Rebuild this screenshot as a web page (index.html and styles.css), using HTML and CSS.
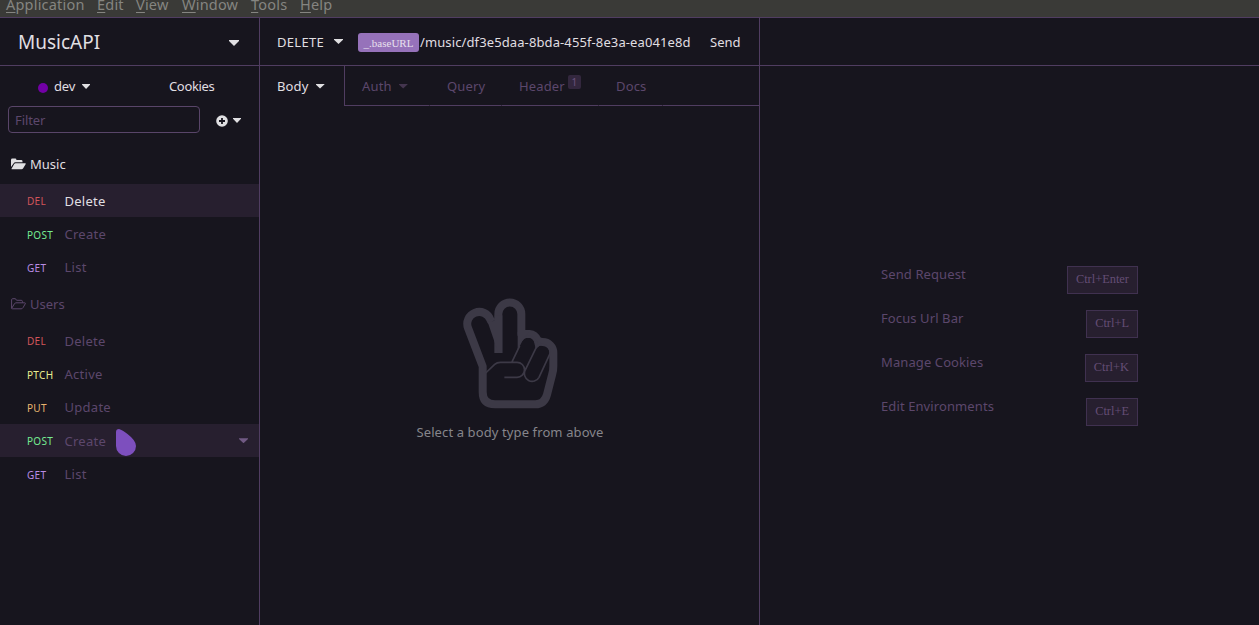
FILE: index.html
```html
<!DOCTYPE html>
<html lang="en">
<head>
<meta charset="utf-8">
<title>MusicAPI</title>
<link rel="stylesheet" href="styles.css">
</head>
<body>
<div class="app">
  <nav class="menubar">
    <span class="m-app"><u>A</u>pplication</span><span class="m-edit"><u>E</u>dit</span><span class="m-view"><u>V</u>iew</span><span class="m-window"><u>W</u>indow</span><span class="m-tools"><u>T</u>ools</span><span class="m-help"><u>H</u>elp</span>
  </nav>
  <main class="panes">
    <aside class="sidebar">
      <header class="workspace"><h1>MusicAPI</h1><i class="caret caret-lg"></i></header>
      <div class="envbar">
        <div class="env"><i class="dot"></i><span>dev</span><i class="caret"></i></div>
        <span class="cookies">Cookies</span>
      </div>
      <div class="filterbar">
        <div class="filter">Filter</div>
        <svg class="plus" viewBox="0 0 12 12"><circle cx="6" cy="6" r="5.800" fill="#e0dfe2"/><path d="M6 3v6M3 6h6" stroke="#17151e" stroke-width="1.8"/></svg>
        <i class="caret"></i>
      </div>
      <div class="tree">
        <div class="folder open">
          <svg class="folder-icon" viewBox="0 0 15 12"><path d="M0 9V2Q0 .6 1.4.6H4.2Q5.3.6 5.5 2H10.200Q11.500 2 11.500 3.300V4.300H4.500Q3.300 4.400 2.500 5.500Z" fill="#e0dfe2"/><path d="M.4 11 3.200 6Q3.700 5.200 4.600 5.200H14.200Q15.200 5.300 14.600 6.200L12.200 10.300Q11.600 11.200 10.600 11.200H.8Z" fill="#e0dfe2"/></svg>
          <span>Music</span>
        </div>
        <div class="request active"><b class="del">DEL</b><span>Delete</span></div>
        <div class="request"><b class="post">POST</b><span>Create</span></div>
        <div class="request"><b class="get">GET</b><span>List</span></div>
        <div class="folder">
          <svg class="folder-icon" viewBox="0 0 15 12"><path d="M.6 10V1.800Q.6.7 1.700.7H4Q5 .7 5.100 1.700 5.200 2.300 6 2.300H10.200Q11.400 2.300 11.400 3.400V4.700M.7 10.300 3.500 5.700Q4.100 4.800 5 4.800H13.700Q14.800 4.900 14.200 5.900L12 9.700Q11.300 10.800 10.200 10.800H1.400Q.3 10.800.7 10.100" fill="none" stroke="#5c476c"/></svg>
          <span>Users</span>
        </div>
        <div class="request"><b class="del">DEL</b><span>Delete</span></div>
        <div class="request"><b class="ptch">PTCH</b><span>Active</span></div>
        <div class="request"><b class="put">PUT</b><span>Update</span></div>
        <div class="request hover"><b class="post">POST</b><span>Create</span><i class="caret row-caret"></i>
          <svg class="pointer" viewBox="0 0 20 27"><path d="M0 3Q0 0 3 0 6.500 1 11.500 5 20 11.500 20 17A10 10 0 0 1 0 17Z" fill="#7d4fbe"/></svg>
        </div>
        <div class="request"><b class="get">GET</b><span>List</span></div>
      </div>
    </aside>
    <section class="editor">
      <header class="urlbar">
        <span class="method">DELETE</span><i class="caret caret-md"></i>
        <span class="tag">_.baseURL</span><span class="url">/music/df3e5daa-8bda-455f-8e3a-ea041e8d</span>
        <span class="send">Send</span>
      </header>
      <div class="tabs">
        <div class="tab tab-body"><span>Body</span><i class="caret caret-md"></i></div>
        <div class="tab tab-auth"><span>Auth</span><i class="caret caret-md"></i></div>
        <div class="tab tab-query"><span>Query</span></div>
        <div class="tab tab-header"><span>Header</span><sup>1</sup></div>
        <div class="tab tab-docs"><span>Docs</span></div>
        <div class="tab-rest"></div>
      </div>
      <div class="empty">
        <svg class="hand" viewBox="185 35 290 337" fill="none" stroke="#3c3946" stroke-linejoin="round">
          <path stroke-width="24" d="M274 110 270 103A35 35 0 0 0 203 128L247 243V320Q247 357 284 357H405Q432 357 440 328L456 265Q459 255 459 243V203A32 32 0 0 0 427 170Q419 170 413 166 404 147 388 146H363V86A34 34 0 0 0 294 86V203"/>
          <path fill="#3c3946" stroke="none" d="M262 110 294 203H306V90H283V106Z"/>
          <path fill="#3c3946" stroke="none" d="M352 140H385L368 163 352 195ZM400 165 425 175 406 190Z"/>
          <path stroke-width="5" d="M256 263 283 237Q290 231 300 231H350A22 22 0 0 1 350 276H312M358 182 335 230M364 166A24 24 0 0 1 406 190L375 254A23 23 0 0 0 416 276L449 205A23 23 0 0 0 406 190"/>
        </svg>
        <p>Select a body type from above</p>
      </div>
    </section>
    <section class="response">
      <header class="response-head"></header>
      <div class="shortcuts">
        <div class="shortcut"><span>Send Request</span><kbd>Ctrl+Enter</kbd></div>
        <div class="shortcut"><span>Focus Url Bar</span><kbd>Ctrl+L</kbd></div>
        <div class="shortcut"><span>Manage Cookies</span><kbd>Ctrl+K</kbd></div>
        <div class="shortcut"><span>Edit Environments</span><kbd>Ctrl+E</kbd></div>
      </div>
    </section>
  </main>
</div>
</body>
</html>
```
FILE: styles.css
```css
* { box-sizing: border-box; }
body { margin: 0; background: #17151e; color: #e0dfe2; font: 13px/20px "Noto Sans", sans-serif; overflow: hidden; }
.app { height: 625px; display: flex; flex-direction: column; white-space: nowrap; }
.menubar { height: 18px; flex: none; display: flex; gap: 12px; padding-left: 6px; background: #3a3a37; border-bottom: 1px solid #503d61; color: #858581; font-size: 14.5px; line-height: 20px; overflow: hidden; }
.menubar u { text-underline-offset: 2px; text-decoration-thickness: 1px; }
.menubar span { flex: none; height: 20px; margin-top: -6px; letter-spacing: .2px; }
.m-app { width: 79px; } .m-edit { width: 27px; } .m-view { width: 34px; } .m-window { width: 57px; } .m-tools { width: 37px; }
.panes { flex: 1; display: grid; grid-template-columns: 260px 500px 1fr; min-height: 0; }
.sidebar, .editor { border-right: 1px solid #503d61; min-width: 0; }
.caret { display: block; flex: none; width: 8px; height: 5px; background: currentColor; clip-path: polygon(0 0, 100% 0, 100% 15%, 50% 100%, 0 15%); }
.caret-md { width: 9px; }
.workspace, .urlbar, .response-head { height: 48px; border-bottom: 1px solid #503d61; display: flex; align-items: center; }
.workspace { padding: 1px 20px 0 18px; justify-content: space-between; }
.workspace h1 { margin: 0; font-size: 19px; font-weight: 400; }
.caret-lg { width: 10px; height: 6px; margin-top: 2px; }
.envbar { height: 40px; display: flex; align-items: center; padding: 0 0 0 38px; }
.env { display: flex; align-items: center; width: 131px; }
.env span { letter-spacing: -.2px; }
.env .caret { margin: 1px 0 0 7px; }
.dot { width: 10px; height: 10px; border-radius: 50%; background: #7200a5; margin: 3px 6px 0 0; }
.cookies { letter-spacing: -.35px; }
.filterbar { height: 27px; display: flex; align-items: center; padding-left: 8px; }
.filter { width: 192px; height: 27px; border: 1px solid #594569; border-radius: 4px; padding: 3px 6px; color: #5c476c; letter-spacing: -.1px; }
.plus { width: 12px; height: 12px; margin: 2px 5px 0 16px; }
.filterbar .caret { margin-top: 2px; }
.tree { padding-top: 11px; color: #5c476c; }
.folder { height: 40px; display: flex; align-items: center; padding-left: 11px; }
.folder.open { color: #e0dfe2; }
.folder-icon { width: 15px; height: 12px; margin: -1px 4px 0 0; }
.request { height: 33.35px; display: flex; align-items: center; padding-left: 27px; position: relative; letter-spacing: .3px; }
.request b { width: 37.4px; font-size: 10px; font-weight: 400; flex: none; padding-top: 1px; }
.request.active, .request.hover { background: #271f2f; }
.active span { color: #e0dfe2; }
.del { color: #d2555a; } .post { color: #75ea91; } .get { color: #b98ce4; } .ptch { color: #e8ee90; } .put { color: #eab46f; }
.row-caret { margin: 0 11px 0 auto; width: 9px; height: 5px; color: #715a84; }
.pointer { position: absolute; left: 116px; top: 5px; width: 20px; height: 27px; }
.urlbar { padding-left: 17px; }
.method { width: 57px; padding-top: 1px; letter-spacing: .3px; }
.tag { margin-left: 15px; width: 61px; height: 19px; border-radius: 3px; background: #9672ba; color: #e8e0ee; font: 11px/20px "Liberation Serif", serif; text-align: center; margin-top: 1px; }
.url { width: 290px; padding-left: 1px; letter-spacing: .11px; }
.send { padding: 1px 0 0 1px; }
.tabs { height: 40px; display: flex; }
.tab { display: flex; align-items: center; border-bottom: 1px solid #503d61; border-right: 1px solid #17151e; color: #5c476c; padding: 1px 0 0 17px; letter-spacing: .15px; }
.tab .caret { margin-left: 7px; color: #44354f; }
.tab-body { width: 85px; color: #e0dfe2; border-bottom: 0; border-right-color: #503d61; padding-top: 0; }
.tab-body .caret { color: #e0dfe2; }
.tab-auth { width: 85px; } .tab-query { width: 72px; } .tab-header { width: 97px; } .tab-docs { width: 64px; }
.tab-rest { flex: 1; border-bottom: 1px solid #503d61; }
.tab sup { width: 13px; height: 14px; margin: -9px 0 0 3px; border-radius: 2px; background: #33273e; font-size: 10px; line-height: 14px; text-align: center; color: #6b537d; }
.empty { display: flex; flex-direction: column; align-items: center; padding: 191px 0 0 1px; color: #86858b; }
.hand { width: 96.7px; height: 112.3px; }
.empty p { margin: 13px 0 0; letter-spacing: .11px; }
.shortcuts { margin: 200px 121px 0; display: flex; flex-direction: column; gap: 16px; color: #5c476c; letter-spacing: .1px; }
.shortcut { height: 28px; display: flex; justify-content: space-between; line-height: 17px; }
.shortcut kbd { height: 28px; padding: 0 8px; border: 1px solid #403150; background: #271f2f; font: 12.4px/25px "Liberation Serif", serif; color: #644d75; letter-spacing: 0; }
```
